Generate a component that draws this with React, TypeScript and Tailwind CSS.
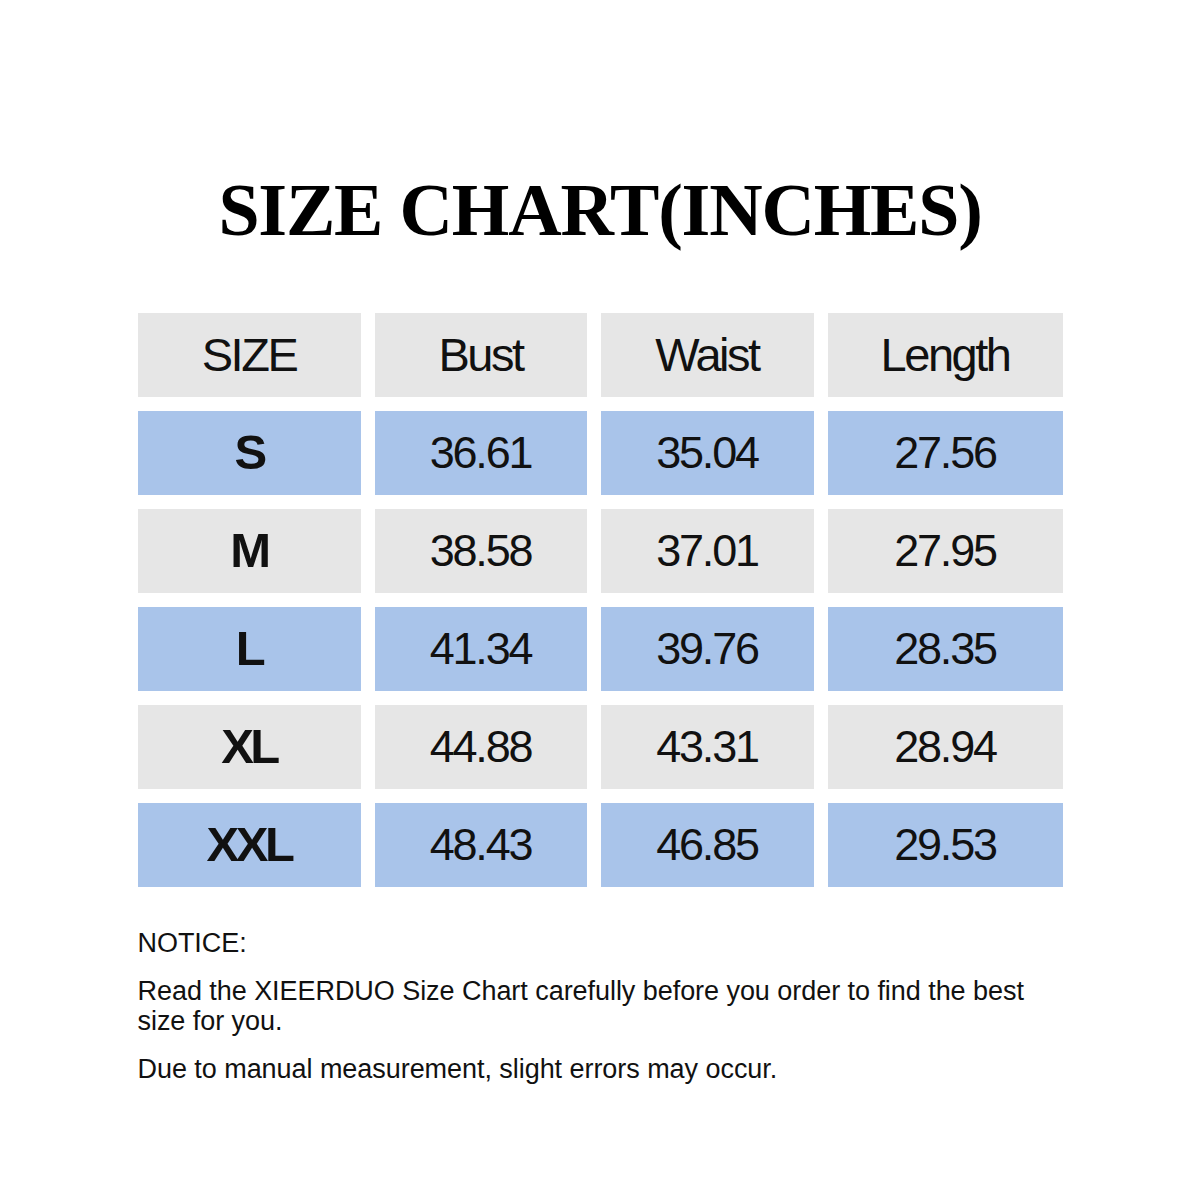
const header = ['SIZE', 'Bust', 'Waist', 'Length'];

const rows = [
  ['S', '36.61', '35.04', '27.56'],
  ['M', '38.58', '37.01', '27.95'],
  ['L', '41.34', '39.76', '28.35'],
  ['XL', '44.88', '43.31', '28.94'],
  ['XXL', '48.43', '46.85', '29.53'],
];

export default function App() {
  return (
    <div className="w-[1200px] h-[1200px] bg-white font-['Liberation_Sans',Arial,sans-serif] text-black">
      {/* Title */}
      <div className="pt-[170px] h-[313px]">
        <h1 className="text-center font-['Liberation_Serif','Times_New_Roman',serif] font-bold text-[74px] leading-[80px] tracking-[-1.2px]">
          SIZE CHART(INCHES)
        </h1>
      </div>

      {/* Table */}
      <div className="mx-auto w-[925px] grid grid-cols-[223px_212px_213px_235px] gap-x-[14px] gap-y-[14px]">
        {header.map((h) => (
          <div
            key={h}
            className="h-[84px] bg-[#e6e6e6] flex items-center justify-center text-[47px] tracking-[-2.5px] text-[#111]"
          >
            {h}
          </div>
        ))}
        {rows.map((row, i) =>
          row.map((cell, j) => (
            <div
              key={i + '-' + j}
              className={
                'h-[84px] flex items-center justify-center text-[#111] ' +
                (i % 2 === 0 ? 'bg-[#a9c4ea] ' : 'bg-[#e6e6e6] ') +
                (j === 0 ? 'font-bold text-[49px] tracking-[-3.5px]' : 'text-[45px] tracking-[-2.2px]')
              }
            >
              {cell}
            </div>
          ))
        )}
      </div>

      {/* Notice */}
      <div className="mx-auto w-[925px] pt-[41px] text-[27px] leading-[30px] tracking-[-0.05px] text-[#111] flex flex-col gap-[18px]">
        <p>NOTICE:</p>
        <p>Read the XIEERDUO Size Chart carefully before you order to find the best size for you.</p>
        <p>Due to manual measurement, slight errors may occur.</p>
      </div>
    </div>
  );
}
